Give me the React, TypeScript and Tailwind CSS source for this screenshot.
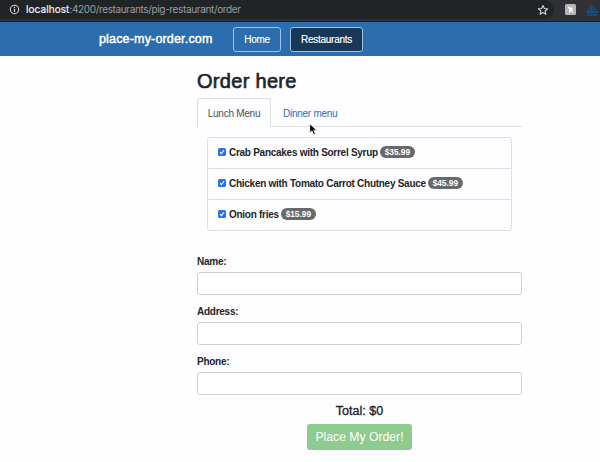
import React from "react";

const items = [
  { name: "Crab Pancakes with Sorrel Syrup", price: "$35.99" },
  { name: "Chicken with Tomato Carrot Chutney Sauce", price: "$45.99" },
  { name: "Onion fries", price: "$15.99" },
];

function Check() {
  return (
    <svg className="block h-[8px] w-[8px] shrink-0" viewBox="0 0 8 8">
      <rect width="8" height="8" rx="1.6" fill="#2672ec" />
      <path d="M2 4.2 L3.4 5.7 L6 2.1" fill="none" stroke="#fff" strokeWidth="1.1" />
    </svg>
  );
}

function BrowserBar() {
  return (
    <div className="flex h-[22px] items-start border-b border-[#1c1c1f] bg-[#303136]">
      <div className="flex h-[19px] w-[554px] items-center rounded-r-[10px] bg-[#202427] pl-[9px] pr-[3px]">
        <svg className="h-[11px] w-[11px]" viewBox="0 0 11 11" fill="none" stroke="#d6d8da">
          <circle cx="5.5" cy="5.5" r="4.2" strokeWidth="1.1" />
          <path d="M5.5 4.8V8M5.5 2.8V3.9" strokeWidth="1.2" />
        </svg>
        <span className="ml-[6px] font-[Inter,sans-serif] text-[10px] leading-[19px] text-[#9a9fa3]">
          <span className="tracking-[0.08px] text-[#f2f3f4] [-webkit-text-stroke:0.2px_#f2f3f4]">localhost</span>
          <span className="tracking-[-0.36px]">:4200/restaurants/pig-restaurant/order</span>
        </span>
        <svg className="ml-auto mr-[2px] h-[12px] w-[12px]" viewBox="0 0 24 24" fill="none" stroke="#d2d4d6" strokeWidth="2.2" strokeLinejoin="round">
          <path d="M12 3l2.7 6 6.6.6-5 4.4 1.5 6.5-5.8-3.5-5.8 3.5 1.5-6.5-5-4.4 6.6-.6z" />
        </svg>
      </div>
      <svg className="ml-[11px] mt-[4px] h-[11px] w-[11px]" viewBox="0 0 11 11">
        <rect width="11" height="11" rx="1.5" fill="#b5b5b6" />
        <path d="M2.5 3 L4.5 2.3 L5.5 4 L7 3 L8 5 L7.3 6 L8.4 8.5 H7.3 L6 6.8 L5 8.7 H3.8 L4.4 5.4Z" fill="#f6f6f6" />
      </svg>
      <svg className="ml-[10px] mt-[4px] h-[12px] w-[12px]" viewBox="0 0 12 12" fill="none" stroke="#1d568b" strokeWidth="1.2">
        <path d="M1 8.5 L5.7 1.5 L10.8 8.5Z M4 8.3 L5.7 5.3 L7.5 8.3 M1 10.8 H11" />
      </svg>
    </div>
  );
}

function NavBar() {
  return (
    <div className="flex h-[34px] items-start bg-[#2c6dad] pl-[99px] pt-[5px] text-white">
      <div className="w-[134px] text-[12.5px] leading-[24px] tracking-[0.17px] [-webkit-text-stroke:0.45px_#fff]">place-my-order.com</div>
      <div className="flex h-[25px] w-[48px] items-center justify-center rounded-[3px] border border-[#9dc2e4] text-[10px] tracking-[-0.26px] [-webkit-text-stroke:0.15px_#fff]">Home</div>
      <div className="ml-[9px] flex h-[25px] w-[73px] items-center justify-center rounded-[3px] border border-[#9dc2e4] bg-[#173857] text-[10px] tracking-[-0.26px] [-webkit-text-stroke:0.15px_#fff]">Restaurants</div>
    </div>
  );
}

function Field({ label }: { label: string }) {
  return (
    <label className="block h-[50px]">
      <span className="block h-[17px] text-[10px] font-bold leading-[13px] tracking-[-0.26px]">{label}</span>
      <input className="block h-[23px] w-full rounded-[3px] border border-[#ced0d3] bg-white outline-none" />
    </label>
  );
}

export default function App() {
  return (
    <div className="h-[462px] w-[600px] overflow-hidden bg-[#fefdff] font-['Liberation_Sans',Arial,sans-serif] text-[#212529]">
      <BrowserBar />
      <NavBar />
      <main className="relative ml-[197px] w-[325px] pt-[12px]">
        <h1 className="h-[30px] text-[20px] leading-[26px] tracking-[0.3px] [-webkit-text-stroke:0.65px_#212529]">Order here</h1>
        <div className="flex h-[29px] text-[10px] tracking-[-0.26px]">
          <div className="flex w-[74px] items-center justify-center rounded-t-[3px] border border-b-0 border-[#dcdee1] text-[#495057]">Lunch Menu</div>
          <div className="flex flex-1 items-center border-b border-[#dcdee1] pl-[12px] pt-[2px] text-[#1f6fb8]">Dinner menu</div>
        </div>
        <svg className="absolute left-[112px] top-[67px] h-[13px] w-[9px]" viewBox="0 0 9 13">
          <path d="M.8.8V9.7L3 7.8L4.6 11.6L6.3 10.9L4.8 7.2H7.6Z" fill="#000" stroke="#fff" strokeWidth=".7" />
        </svg>
        <ul className="mx-[10px] mt-[10px] h-[94px] rounded-[3px] border border-[#dcdde0]">
          {items.map((item) => (
            <li key={item.name} className="flex h-[31px] items-center border-b border-[#dcdde0] pb-[2px] pl-[10px] text-[10px] font-bold last:h-[30px] last:border-b-0">
              <Check />
              <span className="ml-[3px] whitespace-nowrap tracking-[-0.27px]">{item.name}</span>
              <span className="ml-[2px] flex h-[12px] w-[35px] items-center justify-center rounded-full bg-[#68696b] text-[8.3px] text-white">{item.price}</span>
            </li>
          ))}
        </ul>
        <form className="mt-[24px]">
          <Field label="Name:" />
          <Field label="Address:" />
          <Field label="Phone:" />
        </form>
        <div className="-mt-[2px] flex flex-col items-center">
          <div className="text-[12.5px] leading-[16px] [-webkit-text-stroke:0.35px_#212529]">Total: $0</div>
          <button className="mt-[5px] h-[26px] w-[105px] rounded-[3px] bg-[#8fca8f] text-[12.2px] text-white">Place My Order!</button>
        </div>
      </main>
    </div>
  );
}
